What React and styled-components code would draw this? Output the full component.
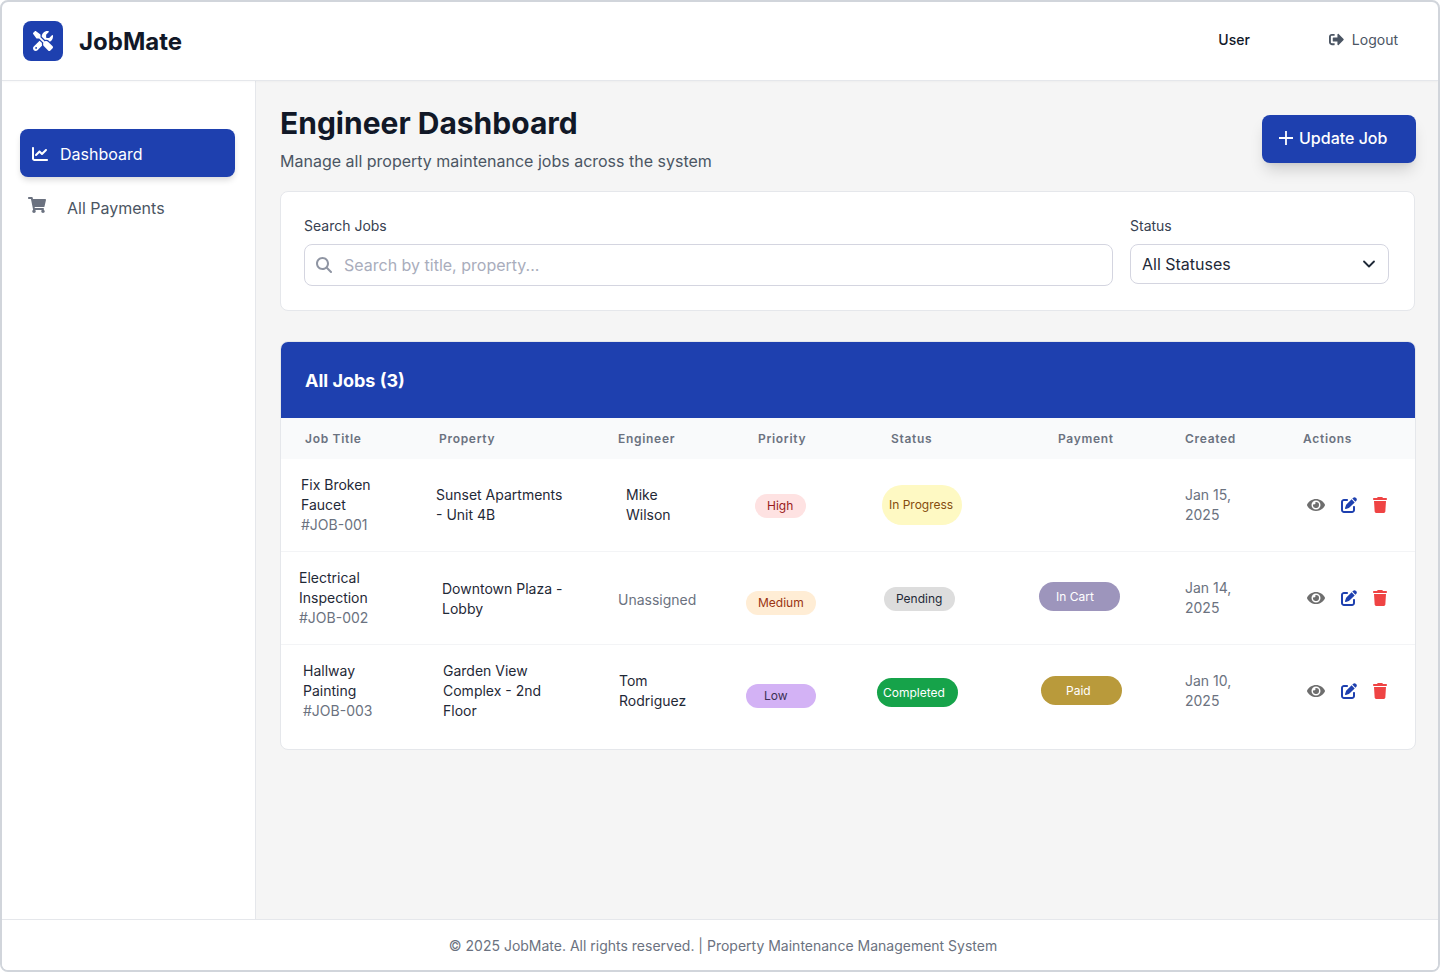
import React from "react";
import styled, { createGlobalStyle } from "styled-components";
import { FaShoppingCart, FaSignOutAlt, FaEye } from "react-icons/fa";
import { FaScrewdriverWrench, FaChartLine, FaPenToSquare, FaTrash, FaMagnifyingGlass } from "react-icons/fa6";
import { ChevronDown } from "lucide-react";

const Global = createGlobalStyle`
  html, body { margin: 0; padding: 0; background: #fff; }
  * { box-sizing: border-box; }
  body { font-family: Inter, "Liberation Sans", sans-serif; color: #111827; -webkit-font-smoothing: antialiased; }
`;

const Frame = styled.div`
  width: 1440px; height: 972px; border: 2px solid #d1d5db; border-radius: 8px;
  display: flex; flex-direction: column; overflow: hidden; background: #fff;
`;
const Header = styled.header`
  height: 79px; flex: none; display: flex; align-items: center; padding: 0 21px;
  border-bottom: 1px solid #e5e7eb; box-shadow: 0 1px 2px rgba(0,0,0,.03); position: relative;
`;
const LogoMark = styled.div`
  width: 40px; height: 40px; border-radius: 8px; background: #1e40af; color: #fff;
  display: flex; align-items: center; justify-content: center; font-size: 20px;
`;
const Brand = styled.div`
  margin: 2px 0 0 16px; font-size: 24px; font-weight: 700; line-height: 32px; color: #111827; flex: 1;
`;
const UserName = styled.span`font-size: 14px; font-weight: 500; color: #111827; margin-bottom: 4px;`;
const LogoutLink = styled.a`
  margin: 0 19px 4px 79px; display: flex; align-items: center; gap: 8px; font-size: 14px; color: #4b5563;
  svg { font-size: 15px; }
`;
const Body = styled.div`flex: 1; display: flex; min-height: 0;`;
const Sidebar = styled.aside`
  width: 254px; flex: none; border-right: 1px solid #e5e7eb; padding: 48px 20px 0 18px; background: #fff;
`;
const NavActive = styled.a`
  height: 48px; display: flex; align-items: center; gap: 12px; padding: 1px 12px 0; border-radius: 8px;
  background: #1e40af; color: #fff; font-size: 16px; box-shadow: 0 4px 6px -1px rgba(0,0,0,.15);
  svg { font-size: 16px; }
`;
const NavItem = styled.a`
  height: 48px; margin-top: 7px; display: flex; align-items: center; gap: 21px; padding: 0 8px; color: #4b5563; font-size: 16px;
  svg { font-size: 18px; color: #6b7280; margin-top: -6px; }
`;
const Main = styled.main`flex: 1; background: #f5f5f5; padding: 24px 22px 0 24px; min-width: 0;`;
const TitleRow = styled.div`display: flex; justify-content: space-between; align-items: flex-start;`;
const H1 = styled.h1`margin: 0; font-size: 30px; font-weight: 700; line-height: 36px; color: #111827;`;
const Sub = styled.p`margin: 8px 0 0; font-size: 16px; line-height: 24px; color: #4b5563;`;
const PrimaryButton = styled.button`
  margin-top: 10px; width: 154px; height: 48px; border: 0; border-radius: 8px; background: #1e40af; color: #fff;
  font: 500 16px Inter, sans-serif; display: flex; align-items: center; gap: 6px; padding: 0 17px 2px;
  box-shadow: 0 10px 15px -3px rgba(0,0,0,.15), 0 4px 6px -4px rgba(0,0,0,.1);
`;
const FilterCard = styled.section`
  margin: 18px 1px 0 0; height: 120px; background: #fff; border: 1px solid #e5e7eb; border-radius: 8px;
  padding: 24px 25px 0 23px; display: flex; gap: 17px;
`;
const Field = styled.div`flex: ${p => p.$flex || "none"}; width: ${p => p.$w || "auto"};`;
const Label = styled.label`display: block; font-size: 14px; line-height: 20px; color: #374151; margin-bottom: 8px;`;
const InputBox = styled.div`
  height: 42px; border: 1px solid #d4d5e0; border-radius: 8px; display: flex; align-items: center; padding: 0 11px; gap: 12px;
  font-size: 16px; color: #a9adbc; background: #fff;
  svg { font-size: 16px; color: #8f95a3; }
`;
const SelectBox = styled.div`
  height: 40px; border: 1px solid #d4d5e0; border-radius: 8px; display: flex; align-items: center; justify-content: space-between;
  padding: 0 9px 0 11px; font-size: 16px; color: #1f2937; background: #fff;
  svg { color: #1f2937; }
`;
const TableCard = styled.section`
  margin-top: 30px; height: 409px; background: #fff; border: 1px solid #e5e7eb; border-radius: 8px; overflow: hidden;
`;
const TableHeading = styled.div`
  height: 77px; margin: -1px -1px 0; background: #1e40af; color: #fff; display: flex; align-items: center;
  padding: 2px 0 0 25px; font-size: 18px; font-weight: 700;
`;
const cols = "134px 179px 140px 133px 167px 127px 118px 1fr";
const HeadRow = styled.div`
  display: grid; grid-template-columns: ${cols}; height: 41px; align-items: center; background: #f9fafb;
  border-bottom: 1px solid #f9fafb;
`;
const HeadCell = styled.div`padding-left: 24px; font-size: 12px; font-weight: 600; letter-spacing: .7px; color: #6b7280;`;
const Row = styled.div`
  display: grid; grid-template-columns: ${cols}; height: ${p => p.$h}px; align-items: center;
  border-top: ${p => p.$first ? "0" : "1px solid #f3f4f6"};
`;
const Cell = styled.div`
  padding-left: ${p => p.$pl}px; margin-top: ${p => p.$mt || 0}px; font-size: 14px; line-height: 20px; white-space: pre-line;
  color: ${p => p.$muted ? "#6b7280" : "#1f2937"};
`;
const Code = styled.div`color: #6b7280;`;
const Badge = styled.span`
  display: block; width: ${p => p.$w}px; height: ${p => p.$h}px; border-radius: 999px; background: ${p => p.$bg}; color: ${p => p.$fg};
  font-size: 12px; line-height: ${p => p.$h}px; padding-left: ${p => p.$tl}px; white-space: nowrap; font-weight: 400;
  margin-top: ${p => p.$mt || 0}px; margin-bottom: ${p => p.$mb || 0}px;
`;
const Actions = styled.div`display: flex; align-items: center; padding-left: 28px; font-size: 16px;`;
const ActionIcon = styled.span`display: flex; width: ${p => p.$w}px; margin-right: ${p => p.$gap}px; color: ${p => p.$c};`;
const Footer = styled.footer`
  height: 51px; flex: none; border-top: 1px solid #e5e7eb; background: #fff; display: flex; align-items: center; justify-content: center;
  font-size: 14px; color: #6b7280; padding-left: 6px;
`;

const rows = [
  { h: 92, title: ["Fix Broken\nFaucet", 20], code: "#JOB-001", prop: ["Sunset Apartments\n- Unit 4B", 21], eng: ["Mike\nWilson", 32],
    pri: { pl: 21, w: 51, h: 24, bg: "#fee2e2", fg: "#991b1b", tl: 12, t: "High", mt: 2 },
    st: { pl: 15, w: 80, h: 40, bg: "#fef9c3", fg: "#854d0e", tl: 7, t: "In Progress" }, date: "Jan 15,\n2025" },
  { h: 93, title: ["Electrical\nInspection", 18], code: "#JOB-002", prop: ["Downtown Plaza -\nLobby", 27], propMt: 2, eng: ["Unassigned", 24], engMt: 4, muted: true,
    pri: { pl: 12, w: 70, h: 24, bg: "#ffedd5", fg: "#9a3412", tl: 12, t: "Medium", mt: 10 },
    st: { pl: 17, w: 71, h: 24, bg: "#dddddd", fg: "#1f2937", tl: 12, t: "Pending", mt: 2 },
    pay: { pl: 5, w: 81, h: 29, bg: "#9d95bc", fg: "#fff", tl: 17, t: "In Cart", mb: 3 }, date: "Jan 14,\n2025" },
  { h: 93, title: ["Hallway\nPainting", 22], code: "#JOB-003", prop: ["Garden View\nComplex - 2nd\nFloor", 28], eng: ["Tom\nRodriguez", 25],
    pri: { pl: 12, w: 70, h: 24, bg: "#d3b2f5", fg: "#3b3054", tl: 18, t: "Low", mt: 10 },
    st: { pl: 10, w: 81, h: 29, bg: "#16a34a", fg: "#fff", tl: 6, t: "Completed", mt: 3 },
    pay: { pl: 7, w: 81, h: 29, bg: "#b99a3b", fg: "#fff", tl: 25, t: "Paid", mb: 1 }, date: "Jan 10,\n2025" },
];

const Pill = ({ d }) => (
  <Cell $pl={d.pl}>
    <Badge $w={d.w} $h={d.h} $bg={d.bg} $fg={d.fg} $tl={d.tl} $mt={d.mt} $mb={d.mb}>{d.t}</Badge>
  </Cell>
);

const PlusIcon = () => (
  <svg width="14" height="14" viewBox="0 0 14 14" aria-hidden="true">
    <path d="M7 0v14M0 7h14" stroke="currentColor" strokeWidth="1.8" fill="none" />
  </svg>
);

export default function App() {
  return (
    <>
      <Global />
      <Frame>
        <Header>
          <LogoMark><FaScrewdriverWrench /></LogoMark>
          <Brand>JobMate</Brand>
          <UserName>User</UserName>
          <LogoutLink><FaSignOutAlt />Logout</LogoutLink>
        </Header>
        <Body>
          <Sidebar>
            <NavActive><FaChartLine />Dashboard</NavActive>
            <NavItem><FaShoppingCart />All Payments</NavItem>
          </Sidebar>
          <Main>
            <TitleRow>
              <div>
                <H1>Engineer Dashboard</H1>
                <Sub>Manage all property maintenance jobs across the system</Sub>
              </div>
              <PrimaryButton><PlusIcon />Update Job</PrimaryButton>
            </TitleRow>
            <FilterCard>
              <Field $flex="1">
                <Label>Search Jobs</Label>
                <InputBox><FaMagnifyingGlass />Search by title, property...</InputBox>
              </Field>
              <Field $w="259px">
                <Label>Status</Label>
                <SelectBox>All Statuses<ChevronDown size={20} strokeWidth={2.2} /></SelectBox>
              </Field>
            </FilterCard>
            <TableCard>
              <TableHeading>All Jobs (3)</TableHeading>
              <HeadRow>
                {["Job Title", "Property", "Engineer", "Priority", "Status", "Payment", "Created", "Actions"].map(h => <HeadCell key={h}>{h}</HeadCell>)}
              </HeadRow>
              {rows.map((r, i) => (
                <Row key={r.code} $h={r.h} $first={i === 0}>
                  <Cell $pl={r.title[1]}>{r.title[0]}<Code>{r.code}</Code></Cell>
                  <Cell $pl={r.prop[1]} $mt={r.propMt}>{r.prop[0]}</Cell>
                  <Cell $pl={r.eng[1]} $mt={r.engMt} $muted={r.muted}>{r.eng[0]}</Cell>
                  <Pill d={r.pri} />
                  <Pill d={r.st} />
                  {r.pay ? <Pill d={r.pay} /> : <Cell $pl={0} />}
                  <Cell $pl={24} $muted>{r.date}</Cell>
                  <Actions>
                    <ActionIcon $w={18} $gap={16} $c="#6e6e6e"><FaEye size={18} /></ActionIcon>
                    <ActionIcon $w={16} $gap={16} $c="#1e40af"><FaPenToSquare size={16} /></ActionIcon>
                    <ActionIcon $w={14} $gap={0} $c="#ef4444"><FaTrash size={16} /></ActionIcon>
                  </Actions>
                </Row>
              ))}
            </TableCard>
          </Main>
        </Body>
        <Footer>© 2025 JobMate. All rights reserved. | Property Maintenance Management System</Footer>
      </Frame>
    </>
  );
}
